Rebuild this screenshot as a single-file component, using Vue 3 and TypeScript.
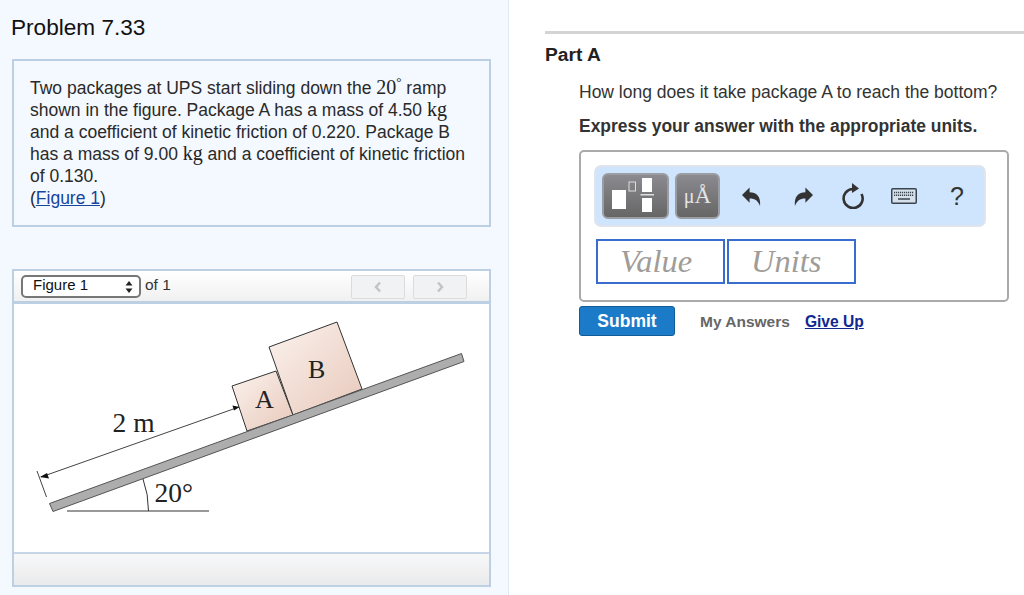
<script setup lang="ts">
const links = ['My Answers']
</script>

<template>
  <div class="page">
    <section class="left">
      <h1>Problem 7.33</h1>
      <div class="problem">
        <p>
          Two packages at UPS start sliding down the <span class="math">20<sup>°</sup></span> ramp<br />
          shown in the figure. Package A has a mass of 4.50 <span class="math">kg</span><br />
          and a coefficient of kinetic friction of 0.220. Package B<br />
          has a mass of 9.00 <span class="math">kg</span> and a coefficient of kinetic friction<br />
          of 0.130.<br />
          (<a href="#">Figure 1</a>)
        </p>
      </div>

      <div class="figure">
        <div class="figure-bar">
          <div class="select">
            <span>Figure 1</span>
            <svg class="updown" width="8" height="14" viewBox="0 0 8 14">
              <path d="M4 1 7.500 5.500H.5zM4 13 .5 8.500h7z" fill="#222" />
            </svg>
          </div>
          <span class="of">of 1</span>
          <div class="pager">
            <button type="button" aria-label="Previous">
              <svg width="10" height="12" viewBox="0 0 10 12"><path d="M7 1.500 3 6l4 4.500" /></svg>
            </button>
            <button type="button" aria-label="Next">
              <svg width="10" height="12" viewBox="0 0 10 12"><path d="M3 1.500 7 6l-4 4.500" /></svg>
            </button>
          </div>
        </div>
        <div class="figure-img">
          <svg width="475" height="248" viewBox="14 304 475 248">
            <defs>
              <linearGradient id="boxFill" x1="0" y1="0" x2="1" y2="1">
                <stop offset="0" stop-color="#fbf3ee" />
                <stop offset="1" stop-color="#e8c8bb" />
              </linearGradient>
            </defs>
            <polygon points="232,386 276,371 293,415 247,431" fill="url(#boxFill)" stroke="#333" stroke-width="1" />
            <polygon points="269,347 337,322 362,389 293,415" fill="url(#boxFill)" stroke="#333" stroke-width="1" />
            <polygon points="49.500,503.500 461.500,353.500 464,361.500 53,511.500" fill="#adadad" stroke="#555" stroke-width="1" />
            <path d="M67 511H209" stroke="#333" fill="none" />
            <path d="M143 479Q148.500 494 148.500 511" stroke="#333" fill="none" />
            <path d="M41 477 239 407M37 471 46.500 497" stroke="#444" fill="none" />
            <polygon points="239.500,407 232.500,405.500 234,410.500" fill="#111" />
            <polygon points="40,477 47,473 49,478.500" fill="#111" />
            <text x="112.500" y="432" class="fig-text big">2 m</text>
            <text x="255" y="408" class="fig-text">A</text>
            <text x="308" y="378" class="fig-text">B</text>
            <text x="154.500" y="502" class="fig-text big">20°</text>
          </svg>
        </div>
        <div class="figure-foot"></div>
      </div>
    </section>

    <section class="right">
      <h2>Part A</h2>
      <p class="question">How long does it take package A to reach the bottom?</p>
      <p class="hint">Express your answer with the appropriate units.</p>

      <div class="answer">
        <div class="toolbar">
          <button type="button" class="tool tool-wide" aria-label="Templates">
            <svg width="62" height="42" viewBox="0 0 62 42">
              <rect x="7" y="15" width="14" height="19" fill="#fff" />
              <rect x="24" y="7" width="6.500" height="9" fill="none" stroke="#ddd" />
              <rect x="37" y="3" width="10" height="14" fill="#fff" />
              <rect x="35.500" y="19" width="13.500" height="1.500" fill="#ddd" />
              <rect x="37" y="23" width="10" height="14" fill="#fff" />
            </svg>
          </button>
          <button type="button" class="tool tool-units"><span class="mu">μ</span>Å</button>

          <svg class="ico undo" width="19" height="21" viewBox="0 0 20 21">
            <path d="M0 9 8 1V6C15 6 20 10 19 20.500 17 15 14 12.500 8 12.500V17Z" fill="#333" />
          </svg>
          <svg class="ico redo" width="19" height="21" viewBox="0 0 20 21">
            <path d="M20 9 12 1V6C5 6 0 10 1 20.500 3 15 6 12.500 12 12.500V17Z" fill="#333" />
          </svg>
          <svg class="ico reload" width="24" height="26" viewBox="0 0 24 26">
            <path d="M12 6A9.500 9.500 0 1 0 20.500 11" fill="none" stroke="#333" stroke-width="2.600" />
            <polygon points="11,0 18,5.500 11,10" fill="#333" />
          </svg>
          <svg class="ico keys" width="26" height="16" viewBox="0 0 26 16">
            <rect x="0.750" y="0.750" width="24.500" height="14.500" rx="1" fill="#d5e0ea" stroke="#39444e" stroke-width="1.500" />
            <path d="M3 4.500H23M3 7.200H23" stroke="#39444e" stroke-width="1.500" stroke-dasharray="1.200 .8" fill="none" />
            <path d="M7 11H19" stroke="#39444e" stroke-width="1.500" fill="none" />
          </svg>
          <span class="help">?</span>
        </div>

        <div class="inputs">
          <div class="field">Value</div>
          <div class="field">Units</div>
        </div>
      </div>

      <div class="actions">
        <button type="button" class="submit">Submit</button>
        <span v-for="l in links" :key="l" class="plain">{{ l }}</span>
        <a href="#" class="give-up">Give Up</a>
      </div>
    </section>
  </div>
</template>

<style>
html,
body {
  margin: 0;
  background: #fff;
}
</style>

<style scoped>
.page {
  display: grid;
  grid-template-columns: 509px 1fr;
  width: 1024px;
  height: 595px;
  overflow: hidden;
  font-family: "Liberation Sans", Arial, sans-serif;
  color: #222;
}

.left {
  box-sizing: border-box;
  height: 595px;
  padding: 15px 17px 0 12px;
  background: #f4f8ff;
  border-right: 1px solid #dfe7f2;
}

h1 {
  margin: 0 0 18px -1px;
  font-size: 22.600px;
  line-height: 26px;
  font-weight: 400;
  color: #111;
}

.problem {
  box-sizing: border-box;
  height: 168px;
  padding: 16px 16px 0;
  border: 2px solid #bdd0e3;
}

.problem p {
  margin: 0;
  font-size: 17.500px;
  line-height: 22px;
  color: #2a2a2a;
}

.math {
  font-family: "Liberation Serif", "Times New Roman", serif;
  font-size: 20px;
  line-height: 0;
  color: #222;
}

sup {
  font-size: 13px;
  line-height: 0;
}

.problem a {
  color: #16459c;
}

.figure {
  margin-top: 42px;
  border: 2px solid #bdd0e3;
  display: flex;
  flex-direction: column;
  height: 318px;
  box-sizing: border-box;
}

.figure-bar {
  box-sizing: border-box;
  height: 33px;
  display: flex;
  align-items: flex-start;
  padding: 4px 22px 0 7px;
  background: linear-gradient(180deg, #fff, #f0f0f1);
  border-bottom: 3px solid #bdd0e3;
}

.select {
  box-sizing: border-box;
  width: 120px;
  height: 23px;
  display: flex;
  align-items: center;
  justify-content: space-between;
  padding: 0 6px 4px 10px;
  background: #fff;
  border: 2px solid #777;
  border-radius: 5px;
  font-size: 15px;
  color: #111;
}

.updown {
  margin-top: 4px;
}

.of {
  margin-left: 4px;
  font-size: 15.500px;
  line-height: 20px;
  color: #333;
}

.pager {
  margin-left: auto;
  display: flex;
  gap: 8px;
}

.pager button {
  box-sizing: border-box;
  width: 54px;
  height: 24px;
  padding: 0;
  display: flex;
  align-items: center;
  justify-content: center;
  background: #f1f2f3;
  border: 1px solid #dcdcdc;
  border-radius: 2px;
}

.pager path {
  fill: none;
  stroke: #c4c4c4;
  stroke-width: 2.500;
}

.figure-img {
  height: 250px;
  box-sizing: border-box;
  background: #fff;
  border-bottom: 2px solid #c6d6e6;
}

.figure-img svg {
  display: block;
}

.fig-text {
  font-family: "Liberation Serif", "Times New Roman", serif;
  font-size: 26px;
  fill: #222;
}

.fig-text.big {
  font-size: 27.500px;
}

.figure-foot {
  flex: 1;
  background: linear-gradient(180deg, #f8f8f9, #e9eaeb);
}

.right {
  padding: 31px 0 0 36px;
}

h2 {
  margin: 0;
  padding-top: 10px;
  border-top: 3px solid #d4d4d4;
  font-size: 19.200px;
  line-height: 21px;
  font-weight: 700;
  color: #222;
}

.question,
.hint {
  margin: 0 0 0 34px;
  font-size: 17.500px;
  line-height: 20px;
  color: #333;
}

.question {
  margin-top: 17px;
}

.hint {
  margin-top: 14px;
  font-size: 17.450px;
  font-weight: 700;
}

.answer {
  box-sizing: border-box;
  width: 430px;
  height: 152px;
  margin: 14px 0 0 34px;
  padding: 13px;
  border: 2px solid #aaa;
  border-radius: 5px;
}

.toolbar {
  box-sizing: border-box;
  width: 392px;
  height: 62px;
  display: flex;
  align-items: center;
  padding: 0 6px;
  background: #cfe4fd;
  border: 2px solid #dfe5ea;
  border-radius: 7px;
}

.tool {
  box-sizing: border-box;
  height: 46px;
  padding: 0;
  display: flex;
  align-items: center;
  justify-content: center;
  background: linear-gradient(180deg, #8b8b90, #666);
  border: 2px solid #9a9ea2;
  border-radius: 6px;
}

.tool svg {
  display: block;
}

.tool-wide {
  width: 67px;
}

.tool-units {
  width: 45px;
  margin-left: 6px;
  font-family: "Liberation Serif", "Times New Roman", serif;
  font-size: 23px;
  color: #e4e4e4;
}

.mu {
  font-size: 20px;
}

.ico {
  display: block;
  flex: none;
}

.undo {
  margin-left: 22px;
}

.redo {
  margin-left: 33px;
}

.reload {
  margin-left: 28px;
}

.keys {
  margin-left: 26px;
}

.help {
  margin-left: 33px;
  font-size: 25px;
  line-height: 30px;
  color: #333;
}

.inputs {
  display: flex;
  gap: 2px;
  margin: 12px 0 0 2px;
}

.field {
  box-sizing: border-box;
  width: 129px;
  height: 45px;
  padding-left: 22px;
  border: 2px solid #3a6cd0;
  font-family: "Liberation Serif", "Times New Roman", serif;
  font-style: italic;
  font-size: 32.500px;
  line-height: 40px;
  color: #a09c98;
}

.actions {
  display: flex;
  align-items: center;
  margin: 4px 0 0 34px;
  height: 30px;
}

.submit {
  box-sizing: border-box;
  width: 96px;
  height: 30px;
  padding: 0;
  background: #1b7bc8;
  border: 1px solid #0f5c96;
  border-radius: 3px;
  color: #fff;
  font: 700 17.500px "Liberation Sans", Arial, sans-serif;
}

.plain {
  margin: 2px 0 0 25px;
  font-size: 15.500px;
  font-weight: 700;
  color: #666;
}

.give-up {
  margin: 2px 0 0 15px;
  font-size: 15.600px;
  font-weight: 700;
  color: #10288f;
}
</style>
